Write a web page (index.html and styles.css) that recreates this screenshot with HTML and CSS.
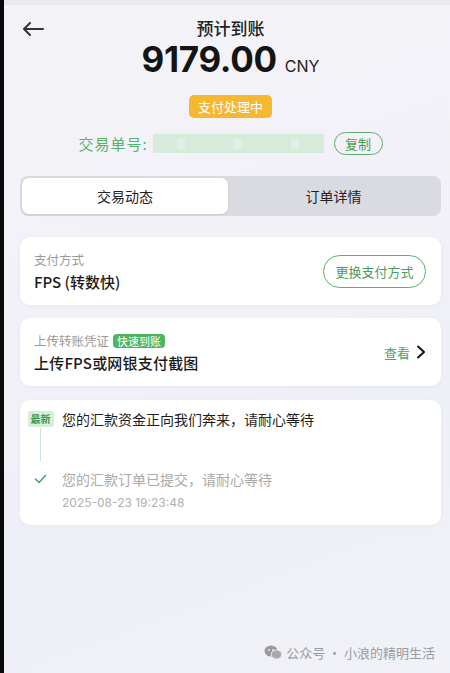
FILE: index.html
```html
<!DOCTYPE html>
<html lang="zh">
<head>
<meta charset="utf-8">
<link rel="stylesheet" href="styles.css">
</head>
<body>
<div class="screen">
  <div class="status"></div>
  <header class="head">
    <svg class="back" width="22" height="14" viewBox="0 0 22 14"><path d="M21 7H2M8 1L2 7l6 6" fill="none" stroke="#333" stroke-width="2" stroke-linecap="round" stroke-linejoin="round"/></svg>
    <div class="title">预计到账</div>
    <div class="amount"><span class="num">9179.00</span><span class="cur">CNY</span></div>
    <div class="status-badge">支付处理中</div>
    <div class="order">
      <span class="order-label">交易单号:</span>
      <span class="blur"><i></i><i></i><i></i></span>
      <span class="copy">复制</span>
    </div>
  </header>

  <div class="tabs">
    <div class="tab active">交易动态</div>
    <div class="tab">订单详情</div>
  </div>

  <section class="card row-card">
    <div class="col">
      <div class="label">支付方式</div>
      <div class="value">FPS (转数快)</div>
    </div>
    <div class="btn-outline">更换支付方式</div>
  </section>

  <section class="card row-card">
    <div class="col">
      <div class="label">上传转账凭证 <span class="fast">快速到账</span></div>
      <div class="value big">上传FPS或网银支付截图</div>
    </div>
    <div class="view">查看
      <svg width="10" height="14" viewBox="0 0 10 14"><path d="M2 1.5l6 5.5-6 5.5" fill="none" stroke="#111" stroke-width="2" stroke-linecap="round" stroke-linejoin="round"/></svg>
    </div>
  </section>

  <section class="card timeline">
    <div class="step">
      <div class="rail">
        <span class="newest">最新</span>
        <span class="line"></span>
      </div>
      <div class="step-body">
        <div class="step-text dark">您的汇款资金正向我们奔来，请耐心等待</div>
      </div>
    </div>
    <div class="step">
      <div class="rail">
        <svg class="check" width="13" height="10" viewBox="0 0 13 10"><path d="M1.5 5l3.5 3.5L11.5 1.5" fill="none" stroke="#4aa564" stroke-width="1.6" stroke-linecap="round" stroke-linejoin="round"/></svg>
      </div>
      <div class="step-body">
        <div class="step-text">您的汇款订单已提交，请耐心等待</div>
        <div class="time">2025-08-23 19:23:48</div>
      </div>
    </div>
  </section>

  <div class="spacer"></div>
  <footer class="mark">
    <svg width="18" height="15" viewBox="0 0 18 15"><ellipse cx="7" cy="6" rx="6.5" ry="5.5" fill="#9a9a9e"/><ellipse cx="12.5" cy="9.5" rx="5.3" ry="4.5" fill="#a9a9ad" stroke="#eef0f5" stroke-width="1"/><circle cx="5" cy="5" r="0.9" fill="#eef0f5"/><circle cx="9" cy="5" r="0.9" fill="#eef0f5"/></svg>
    <span>公众号 · 小浪的精明生活</span>
  </footer>
</div>
</body>
</html>
```
FILE: styles.css
```css
html, body {
  margin: 0;
  padding: 0;
}
body {
  width: 450px;
  height: 673px;
  overflow: hidden;
  font-family: "Noto Sans CJK SC", "Noto Sans", sans-serif;
  color: #1a1a1a;
}
.screen {
  box-sizing: border-box;
  width: 450px;
  height: 673px;
  border-left: 4px solid #0a0a0a;
  padding: 0 9px 0 16px;
  display: flex;
  flex-direction: column;
  background: linear-gradient(160deg, #f4f3f8 0%, #f2f1f7 40%, #eef0f7 70%, #f1f2f7 100%);
  position: relative;
}
.status {
  height: 5px;
  margin: 0 -9px 0 -16px;
  background: #e9e9ee;
}
.head {
  display: flex;
  flex-direction: column;
  align-items: center;
  position: relative;
}
.back {
  position: absolute;
  left: 2px;
  top: 17px;
}
.title {
  margin-top: 13px;
  font-size: 17px;
  line-height: 20px;
  color: #222;
  font-weight: 500;
}
.amount {
  margin-top: 1px;
  height: 40px;
  display: flex;
  align-items: baseline;
  gap: 8px;
}
.num {
  font-family: Inter, "Noto Sans", sans-serif;
  font-weight: 700;
  font-size: 35px;
  line-height: 40px;
  letter-spacing: -0.3px;
  color: #141414;
}
.cur {
  font-family: Inter, "Noto Sans", sans-serif;
  font-size: 16px;
  color: #222;
}
.status-badge {
  margin-top: 16px;
  height: 23px;
  padding: 0 9px;
  border-radius: 5px;
  background: #f6b731;
  color: #fff;
  font-size: 13px;
  line-height: 23px;
}
.order {
  margin-top: 14px;
  height: 23px;
  display: flex;
  align-items: center;
  margin-left: 0;
}
.order-label {
  color: #55b36a;
  font-size: 15px;
  letter-spacing: 1px;
}
.blur {
  margin-left: 5px;
  width: 171px;
  height: 19px;
  background: #d6ebdb;
  display: flex;
  justify-content: space-around;
  align-items: center;
}
.blur i {
  width: 8px;
  height: 10px;
  background: #e3eee6;
}
.copy {
  margin-left: 10px;
  box-sizing: border-box;
  height: 23px;
  width: 49px;
  border: 1px solid #5cae6f;
  border-radius: 12px;
  color: #4a9c5e;
  font-size: 13px;
  text-align: center;
  line-height: 21px;
}
.tabs {
  margin-top: 21px;
  height: 40px;
  box-sizing: border-box;
  padding: 2px;
  border-radius: 8px;
  background: #d9dbe1;
  display: flex;
}
.tab {
  flex: 1;
  text-align: center;
  line-height: 36px;
  font-size: 14px;
  color: #222;
  border-radius: 7px;
}
.tab.active {
  flex: 0 0 206px;
  background: #fff;
  box-shadow: 0 1px 2px rgba(0,0,0,0.08);
}
.card {
  background: #fff;
  border-radius: 10px;
  box-shadow: 0 1px 4px rgba(40,50,90,0.05);
}
.row-card {
  margin-top: 21px;
  height: 68px;
  box-sizing: border-box;
  padding: 0 15px 0 14px;
  display: flex;
  align-items: center;
  justify-content: space-between;
}
.row-card + .row-card {
  margin-top: 13px;
}
.col {
  display: flex;
  flex-direction: column;
  gap: 3px;
}
.label {
  font-size: 12.5px;
  color: #9a9a9a;
  line-height: 18px;
  display: flex;
  align-items: center;
  gap: 4px;
}
.value {
  font-size: 15px;
  font-weight: 500;
  color: #1a1a1a;
  line-height: 20px;
}
.value.big {
  font-size: 15px;
  letter-spacing: 0.2px;
}
.fast {
  background: #4cb55e;
  color: #fff;
  font-size: 11px;
  line-height: 14px;
  padding: 0 4px;
  border-radius: 4px;
}
.btn-outline {
  box-sizing: border-box;
  width: 103px;
  height: 33px;
  border: 1px solid #5cae6f;
  border-radius: 17px;
  color: #4a9c5e;
  font-size: 13px;
  line-height: 31px;
  text-align: center;
}
.view {
  display: flex;
  align-items: center;
  gap: 6px;
  color: #4aa95f;
  font-size: 13px;
}
.timeline {
  margin-top: 14px;
  height: 125px;
  box-sizing: border-box;
  padding: 11px 14px 0 7px;
  display: flex;
  flex-direction: column;
}
.step {
  display: flex;
}
.rail {
  width: 27px;
  display: flex;
  flex-direction: column;
  align-items: center;
  flex: none;
}
.newest {
  background: #d7eedb;
  color: #3f9a52;
  font-size: 10px;
  line-height: 16px;
  padding: 0 3px;
  border-radius: 2px;
  font-weight: 600;
}
.line {
  width: 1px;
  height: 33px;
  margin-top: 1px;
  background: #cfe5d4;
}
.check {
  margin-top: 13px;
}
.step-body {
  margin-left: 8px;
}
.step-text {
  font-size: 14px;
  line-height: 16px;
  color: #aaa;
}
.step-text.dark {
  color: #1e1e1e;
}
.step + .step .step-text {
  margin-top: 10px;
}
.time {
  margin-top: 8px;
  font-family: Inter, "Noto Sans", sans-serif;
  font-size: 12px;
  color: #b0b0b0;
  line-height: 16px;
}
.spacer {
  flex: 1;
}
.mark {
  display: flex;
  align-items: center;
  justify-content: flex-end;
  gap: 4px;
  margin-right: 6px;
  margin-bottom: 11px;
  color: #9b9b9f;
  font-size: 13px;
}
```
